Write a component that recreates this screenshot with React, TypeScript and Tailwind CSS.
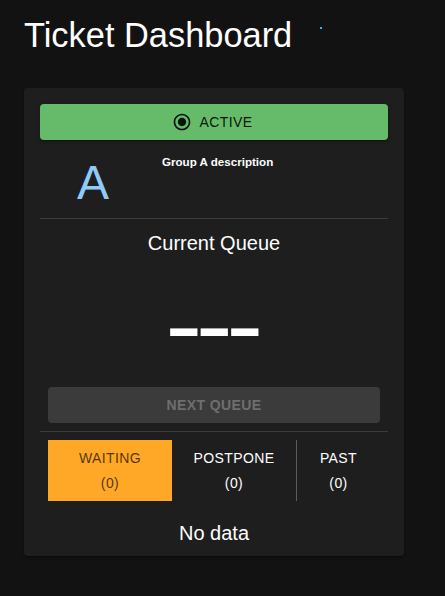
import React from "react";

function RadioChecked() {
  return (
    <svg width="20" height="20" viewBox="0 0 24 24" fill="currentColor" aria-hidden="true">
      <path d="M12 7c-2.76 0-5 2.24-5 5s2.24 5 5 5 5-2.24 5-5-2.24-5-5-5zm0-5C6.48 2 2 6.48 2 12s4.48 10 10 10 10-4.48 10-10S17.52 2 12 2zm0 18c-4.42 0-8-3.58-8-8s3.58-8 8-8 8 3.58 8 8-3.58 8-8 8z" />
    </svg>
  );
}

export default function App() {
  return (
    <div
      className="min-h-screen bg-[#121212] text-white px-6"
      style={{ fontFamily: '"Liberation Sans", Arial, sans-serif' }}
    >
      <div className="flex items-start pt-[14px]">
        <h1 className="text-[34.4px] leading-[42px] font-normal">Ticket Dashboard</h1>
        <span className="ml-[28px] mt-[13px] w-[2px] h-[2px] bg-[#29b6f6]" />
      </div>

      <div className="mt-8 w-[380px] rounded bg-[#1e1e1e] px-4 pt-4 pb-[7px] shadow-[0_2px_1px_-1px_rgba(0,0,0,0.2),0_1px_1px_0_rgba(0,0,0,0.14),0_1px_3px_0_rgba(0,0,0,0.12)]">
        <button className="flex h-9 w-full items-center justify-center rounded bg-[#66bb6a] text-[14px] tracking-[0.4px] uppercase text-black/90 shadow-[0_3px_1px_-2px_rgba(0,0,0,0.2),0_2px_2px_0_rgba(0,0,0,0.14),0_1px_5px_0_rgba(0,0,0,0.12)]">
          <span className="-ml-1 mr-2 flex">
            <RadioChecked />
          </span>
          Active
        </button>

        <div className="mt-3 flex h-[66px] items-start">
          <div className="w-[106px] mt-[3px] text-center text-[48px] leading-[56px] text-[#90caf9]">A</div>
          <div className="pl-4 text-[11.6px] leading-[20px] font-bold">Group A description</div>
        </div>

        <div className="h-px bg-[#3b3b3b]" />

        <div className="mt-2 text-center text-[20px] leading-[32px]">Current Queue</div>

        <div className="mt-[18px] flex h-[96px] justify-center">
          <span className="inline-block origin-center scale-x-[1.16] text-[96px] leading-[96px] tracking-[-5.7px] pr-[5.7px]">---</span>
        </div>

        <button
          disabled
          className="mx-2 mt-[14px] flex h-9 w-[332px] items-center justify-center rounded bg-[#3b3b3b] text-[14px] font-bold tracking-[0.4px] text-[#6e6e6e]"
        >
          NEXT QUEUE
        </button>

        <div className="mt-2 h-px bg-[#3b3b3b]" />

        <div className="mx-2 mt-2 flex h-[61px] text-[14px] leading-[25px] tracking-[0.4px]">
          <div className="flex w-[124px] flex-col items-center justify-center bg-[#ffa726] text-black/70">
            <span>WAITING</span>
            <span>(0)</span>
          </div>
          <div className="flex w-[125px] flex-col items-center justify-center border-r border-[#5c5c5c]">
            <span>POSTPONE</span>
            <span>(0)</span>
          </div>
          <div className="flex flex-1 flex-col items-center justify-center">
            <span>PAST</span>
            <span>(0)</span>
          </div>
        </div>

        <div className="mt-4 text-center text-[20px] leading-[32px]">No data</div>
      </div>
    </div>
  );
}
